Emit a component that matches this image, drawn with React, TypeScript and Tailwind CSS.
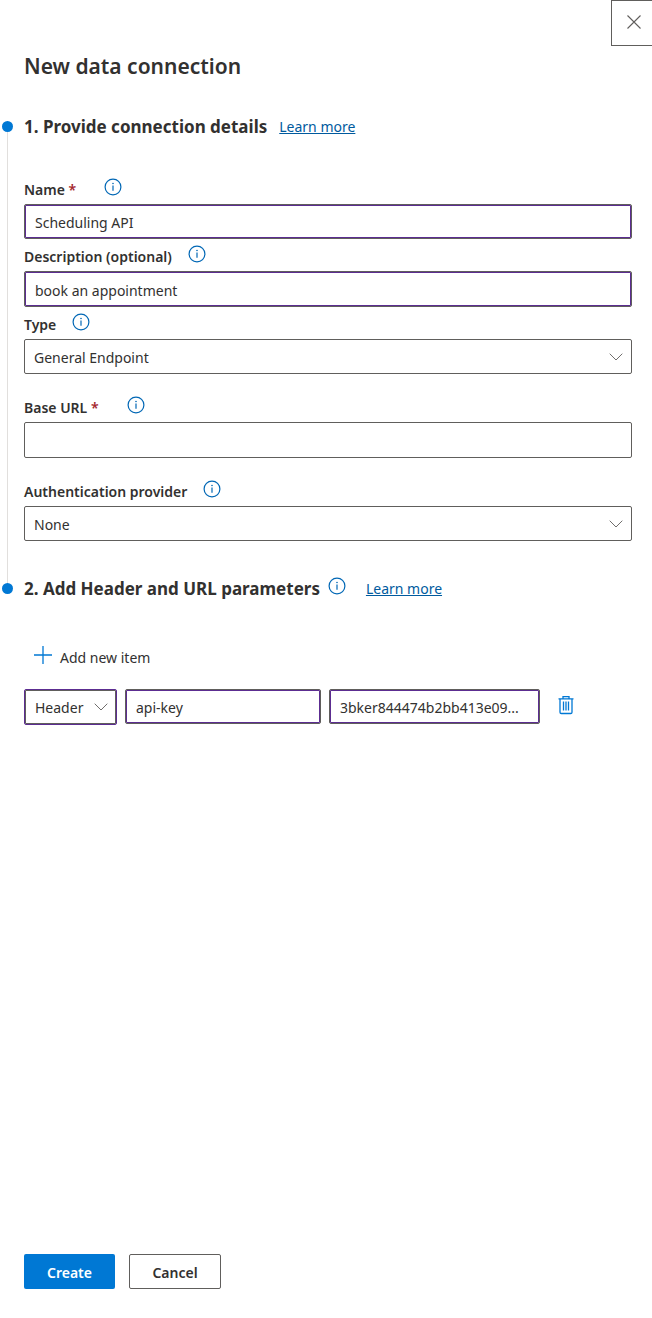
import { useState } from 'react';
import type { ReactNode } from 'react';

const InfoIcon = () => (
    <svg viewBox="0 0 18 18" className="size-[18px] shrink-0" fill="none" aria-hidden="true">
        <circle cx="9" cy="9" r="7.9" stroke="#0067b5" strokeWidth="1.2" />
        <path d="M9 7.5v5.2" stroke="#0067b5" strokeWidth="1.2" />
        <circle cx="9" cy="5.5" r="0.8" fill="#0067b5" />
    </svg>
);

const ChevronIcon = () => (
    <svg viewBox="0 0 14 8" className="pointer-events-none absolute top-1/2 right-[9px] h-2 w-3.5 -translate-y-1/2" fill="none" aria-hidden="true">
        <path d="M0.7 0.7L7 7l6.3-6.3" stroke="#605e5c" strokeWidth="0.9" />
    </svg>
);

const TrashIcon = () => (
    <svg viewBox="0 0 16 20" className="h-5 w-4" fill="none" stroke="#0078d4" strokeWidth="1.3" aria-hidden="true">
        <path d="M0.5 3.8h15M5 3.8V1.6h6v2.2M2 3.8v13.4c0 .8.5 1.3 1.3 1.3h9.4c.8 0 1.3-.5 1.3-1.3V3.8" />
        <path d="M5.5 6.5v9M8 6.5v9M10.5 6.5v9" />
    </svg>
);

type LabelProps = { htmlFor: string; text: string; required?: boolean };

const FieldLabel = ({ htmlFor, text, required }: LabelProps) => (
    <div className={required ? 'flex h-8 items-center gap-7 pb-0.5' : 'flex h-8 items-center gap-4 pb-0.5'}>
        <label htmlFor={htmlFor} className="pt-1.5 text-sm font-semibold">
            {text}
            {required && <span className="text-[#a4262c]"> *</span>}
        </label>
        <InfoIcon />
    </div>
);

type StepProps = { title: string; first?: boolean; info?: boolean; children: ReactNode };

const Step = ({ title, first, info, children }: StepProps) => (
    <section className="flex gap-[9px]">
        {/* Timeline rail */}
        <div className="flex w-[15px] shrink-0 flex-col items-center">
            <span className={first ? 'h-2.5 w-px' : 'h-2.5 w-px bg-[#e1dfdd]'} />
            <span className="size-[11px] rounded-full bg-[#0078d4]" />
            {first && <span className="w-px grow bg-[#e1dfdd]" />}
        </div>
        <div className="min-w-0 grow pr-5">
            <div className="flex h-8 items-center">
                <h2 className="text-[17px] font-bold text-[#323130]">{title}</h2>
                {info && <span className="mb-1.5 ml-2"><InfoIcon /></span>}
                <a href="#learn" className={info ? 'ml-5 text-sm text-[#005a9e] underline' : 'ml-3 text-sm text-[#005a9e] underline'}>
                    Learn more
                </a>
            </div>
            {children}
        </div>
    </section>
);

const filled = 'block w-full rounded-[2px] border border-[#605e5c] px-2.5 pt-0.5 text-sm inset-ring inset-ring-[#5c2d91] outline-none';
const plain = 'block w-full appearance-none rounded-[2px] border border-[#605e5c] bg-white px-[9px] pt-0.5 text-sm outline-none';

const App = () => {
    const [name, setName] = useState('Scheduling API');
    const [description, setDescription] = useState('book an appointment');
    const [url, setUrl] = useState('');
    const [key, setKey] = useState('api-key');
    const [value, setValue] = useState('3bker844474b2bb413e09...');

    return (
        <main className="flex min-h-screen flex-col bg-white font-['Noto_Sans','Open_Sans',sans-serif] text-[#323130]">
            {/* Header */}
            <header className="flex items-start justify-between pb-[29px] pl-6">
                <h1 className="mt-[50px] text-[21px] leading-8 font-semibold">New data connection</h1>
                <button type="button" aria-label="Close" className="flex h-[46px] w-[41px] items-center justify-center border border-r-0 border-[#605e5c] pb-0.5 pl-1">
                    <svg viewBox="0 0 14 14" className="size-3.5" fill="none" aria-hidden="true">
                        <path d="M0.5 0.5l13 13M13.5 0.5l-13 13" stroke="#605e5c" strokeWidth="1.1" />
                    </svg>
                </button>
            </header>

            <Step title="1. Provide connection details" first>
                <div className="pt-[29px] pb-8">
                    <FieldLabel htmlFor="name" text="Name" required />
                    <input id="name" value={name} onChange={(e) => setName(e.target.value)} className={`${filled} h-[35px]`} />

                    <FieldLabel htmlFor="description" text="Description (optional)" />
                    <input id="description" value={description} onChange={(e) => setDescription(e.target.value)} className={`${filled} h-9`} />

                    <FieldLabel htmlFor="type" text="Type" />
                    <div className="relative">
                        <select id="type" className={`${plain} h-[35px]`}>
                            <option>General Endpoint</option>
                        </select>
                        <ChevronIcon />
                    </div>

                    <div className="mt-4">
                        <FieldLabel htmlFor="url" text="Base URL" required />
                        <input id="url" value={url} onChange={(e) => setUrl(e.target.value)} className={`${plain} h-9`} />
                    </div>

                    <div className="mt-4">
                        <FieldLabel htmlFor="auth" text="Authentication provider" />
                        <div className="relative">
                            <select id="auth" className={`${plain} h-[35px]`}>
                                <option>None</option>
                            </select>
                            <ChevronIcon />
                        </div>
                    </div>
                </div>
            </Step>

            <Step title="2. Add Header and URL parameters" info>
                <button type="button" className="mt-9 flex h-8 items-center gap-2 pt-0.5 pl-2.5 text-sm">
                    <svg viewBox="0 0 18 18" className="mb-1.5 size-[18px]" fill="none" aria-hidden="true">
                        <path d="M9 0v18M0 9h18" stroke="#0078d4" strokeWidth="1.3" />
                    </svg>
                    Add new item
                </button>

                {/* Parameter row */}
                <div className="mt-4 flex items-start gap-2">
                    <div className="relative w-[93px] shrink-0">
                        <select aria-label="Parameter kind" className="block h-9 w-full appearance-none rounded-[2px] border border-[#5c2d91] bg-white px-2.5 pt-0.5 text-sm inset-ring inset-ring-[#605e5c] outline-none">
                            <option>Header</option>
                        </select>
                        <ChevronIcon />
                    </div>
                    <div className="w-[196px]">
                        <input aria-label="Parameter name" value={key} onChange={(e) => setKey(e.target.value)} className={`${filled} h-[35px]`} />
                    </div>
                    <div className="w-[211px]">
                        <input aria-label="Parameter value" value={value} onChange={(e) => setValue(e.target.value)} className={`${filled} h-[35px]`} />
                    </div>
                    <button type="button" aria-label="Delete parameter" className="flex h-8 w-9 items-center justify-center">
                        <TrashIcon />
                    </button>
                </div>
            </Step>

            {/* Actions */}
            <footer className="mt-auto flex gap-3.5 px-6 pt-8 pb-[29px]">
                <button type="button" className="h-[35px] w-[91px] rounded-[2px] bg-[#0078d4] pt-0.5 text-sm font-semibold text-white">Create</button>
                <button type="button" className="h-[35px] w-[92px] rounded-[2px] border border-[#605e5c] bg-white pt-0.5 text-sm font-semibold">Cancel</button>
            </footer>
        </main>
    );
};

export default App;
